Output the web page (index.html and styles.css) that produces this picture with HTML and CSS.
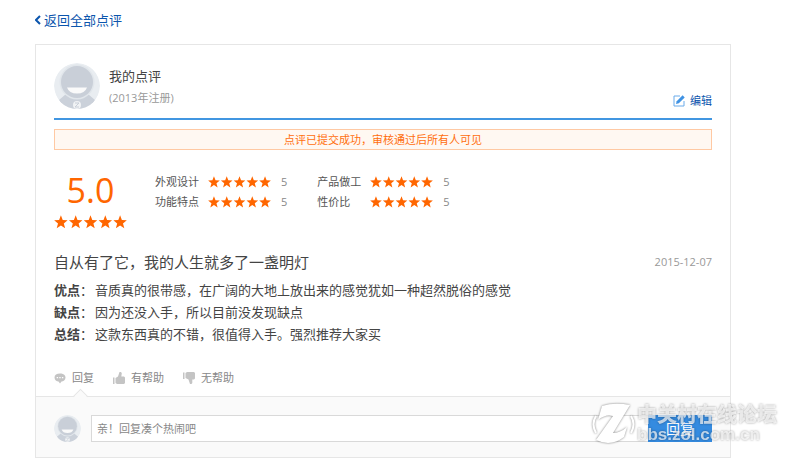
FILE: index.html
```html
<!DOCTYPE html>
<html lang="zh-CN">
<head>
  <meta charset="UTF-8">
  <meta name="viewport" content="width=device-width, initial-scale=1.0">
  <title>我的点评</title>
  <link rel="stylesheet" href="styles.css">
</head>
<body>

  <!-- shared shapes -->
  <svg class="sprite" aria-hidden="true">
    <symbol id="star" viewBox="0 0 20 20">
      <path d="M10 .3l2.600 6.700 7.200.4-5.600 4.600 1.900 7.200-6.100-4-6.100 4 1.900-7.200L.2 7.400l7.200-.4z"/>
    </symbol>
    <symbol id="stars" viewBox="0 0 74 14">
      <use href="#star" x="0" width="14" height="14"/>
      <use href="#star" x="15" width="14" height="14"/>
      <use href="#star" x="30" width="14" height="14"/>
      <use href="#star" x="45" width="14" height="14"/>
      <use href="#star" x="60" width="14" height="14"/>
    </symbol>
    <symbol id="face" viewBox="0 0 46 46">
      <clipPath id="round"><circle cx="23" cy="23" r="23"/></clipPath>
      <g clip-path="url(#round)">
        <circle cx="23" cy="23" r="23" fill="#e9edf1"/>
        <path d="M5 37l7-6q11 8 22 0l7 6-5 9H10z" fill="#cbd1da"/>
        <circle cx="23" cy="19" r="17.500" fill="#e1e6eb"/>
        <circle cx="23" cy="19" r="16" fill="#c9cfd8"/>
        <path d="M13 24.500h20q-2 6-10 6t-10-6z" fill="#fafafa"/>
        <circle cx="23" cy="42" r="4" fill="#f1f3f5"/>
        <path d="M21 40h4l-4 4h4" fill="none" stroke="#c9cfd8"/>
      </g>
    </symbol>
  </svg>

  <a class="back" href="#">
    <svg viewBox="0 0 6 10"><path d="M5 1L1 5l4 4"/></svg>
    返回全部点评
  </a>

  <main class="card">
    <article class="review">
      <header class="user">
        <svg class="avatar"><use href="#face"/></svg>
        <div class="user-info">
          <h1>我的点评</h1>
          <p>(2013年注册)</p>
        </div>
        <a class="edit" href="#">
          <svg viewBox="0 0 12 12">
            <path d="M7 1H1v10h10V6" fill="none" stroke="#6aabea"/>
            <path d="M3 9l.7-2.800L9.600.3l2.100 2.100L5.800 8.300z" fill="#3f92e3"/>
          </svg>
          编辑
        </a>
      </header>

      <p class="notice">点评已提交成功，审核通过后所有人可见</p>

      <section class="scores">
        <div class="overall">
          <strong>5.0</strong>
          <svg class="stars-big"><use href="#stars"/></svg>
        </div>
        <ul class="details">
          <li><span class="name">外观设计</span><svg class="stars"><use href="#stars"/></svg><span class="value">5</span></li>
          <li><span class="name">产品做工</span><svg class="stars"><use href="#stars"/></svg><span class="value">5</span></li>
          <li><span class="name">功能特点</span><svg class="stars"><use href="#stars"/></svg><span class="value">5</span></li>
          <li><span class="name">性价比</span><svg class="stars"><use href="#stars"/></svg><span class="value">5</span></li>
        </ul>
      </section>

      <div class="title-row">
        <h2>自从有了它，我的人生就多了一盏明灯</h2>
        <time datetime="2015-12-07">2015-12-07</time>
      </div>

      <div class="content">
        <p><b>优点</b>：<span>音质真的很带感，在广阔的大地上放出来的感觉犹如一种超然脱俗的感觉</span></p>
        <p><b>缺点</b>：<span>因为还没入手，所以目前没发现缺点</span></p>
        <p><b>总结</b>：<span>这款东西真的不错，很值得入手。强烈推荐大家买</span></p>
      </div>

      <div class="actions">
        <button type="button">
          <svg viewBox="0 0 12 12">
            <path d="M6 1.500c3.300 0 5.500 1.600 5.500 4S9.300 9.500 7.500 9.500L6 11.500 4.500 9.500C2.700 9.500.5 8 .5 5.500s2.200-4 5.500-4z"/>
            <path d="M2.700 5h1.400v1.300H2.700zM5.300 5h1.400v1.300H5.300zM7.900 5h1.400v1.300H7.900z" fill="#fff"/>
          </svg>
          回复
        </button>
        <button type="button">
          <svg viewBox="0 0 12 12"><path d="M0 5.500h1.500V12H0zM2.500 6L5 4.500 6.500 0H8l.8 1.200-.5 3.300H11l1 1V11l-1 1H4l-1.500-1z"/></svg>
          有帮助
        </button>
        <button type="button">
          <svg viewBox="0 0 12 12"><path d="M0 .5h1.500V7H0zM2.500 1L4 0h7l1 1v5.500l-1 1H9.300V11l-.8 1H7L5.500 7.500 2.500 6z"/></svg>
          无帮助
        </button>
      </div>
    </article>

    <form class="reply">
      <svg class="avatar-small"><use href="#face"/></svg>
      <input type="text" aria-label="回复内容" placeholder="亲！回复凑个热闹吧">
      <button type="submit">回复</button>
    </form>

    <div class="watermark">
      <svg viewBox="0 0 44 42">
        <path d="M4 13q-5 8 0 17M39 13q5 8 0 17" class="arc"/>
        <path d="M10 3Q22-1 38 2L21 30q7 0 14-6l-3 10Q19 44 4 37L21 13Q13 11 6 17z"/>
      </svg>
      <p><strong>中关村在线论坛</strong><span>bbs.zol.com.cn</span></p>
    </div>
  </main>

</body>
</html>
```

FILE: styles.css
```css
body {
  margin: 0;
  padding: 12px 69px 8px 35px;
  font-family: "Open Sans", "Noto Sans CJK SC", sans-serif;
  font-size: 11px;
  line-height: 16px;
  color: #444;
  background-color: #fff;
}

h1, h2, p, ul {
  margin: 0;
  padding: 0;
  font-weight: inherit;
}

a {
  color: #0b55ad;
  text-decoration: none;
}

button, input {
  font: inherit;
}

.sprite {
  position: absolute;
  width: 0;
  height: 0;
}

.back {
  display: flex;
  align-items: center;
  gap: 3px;
  width: max-content;
  font-size: 13px;
}

.back svg {
  width: 6px;
  height: 10px;
  fill: none;
  stroke: #0b55ad;
  stroke-width: 2;
}

.card {
  position: relative;
  margin-top: 16px;
  border: 1px solid #e6e6e6;
}

.review {
  padding: 18px 18px 10px;
}

/* user */
.user {
  display: flex;
  align-items: center;
  padding-bottom: 9px;
  border-bottom: 2px solid #4196e1;
}

.avatar {
  width: 46px;
  height: 46px;
}

.user-info {
  flex: 1;
  margin-left: 9px;
  padding-top: 2px;
  line-height: 21px;
}

.user-info h1 {
  font-size: 13px;
}

.user-info p {
  color: #999;
}

.edit {
  display: flex;
  align-items: center;
  align-self: flex-end;
  gap: 5px;
}

.edit svg {
  width: 12px;
  height: 12px;
}

.notice {
  margin-top: 9px;
  line-height: 19px;
  text-align: center;
  color: #ff6f0f;
  background-color: #fff8f2;
  border: 1px solid #ffc9a3;
}

/* scores */
.scores {
  display: flex;
  align-items: flex-start;
  gap: 28px;
  margin-top: 22px;
}

.overall {
  display: flex;
  flex-direction: column;
  align-items: center;
  gap: 7px;
}

.overall strong {
  font-size: 34px;
  font-weight: 400;
  line-height: 36px;
  color: #ff6600;
}

.stars, .stars-big {
  fill: #ff6600;
}

.stars {
  width: 63px;
  height: 12px;
}

.stars-big {
  width: 73px;
  height: 14px;
}

.details {
  display: grid;
  grid-template-columns: max-content max-content;
  column-gap: 30px;
  line-height: 20px;
  color: #555;
  list-style: none;
}

.details li {
  display: flex;
  align-items: center;
}

.name {
  width: 44px;
  margin-right: 9px;
}

.value {
  margin-left: 10px;
  color: #888;
}

/* text of the review */
.title-row {
  display: flex;
  align-items: center;
  justify-content: space-between;
  margin-top: 21px;
  line-height: 24px;
}

.title-row h2 {
  font-size: 15px;
}

.title-row time {
  color: #999;
}

.content {
  margin-top: 5px;
  font-size: 13px;
  line-height: 22px;
}

.content span {
  margin-left: 2px;
}

.actions {
  display: flex;
  gap: 19px;
  margin-top: 25px;
}

.actions button {
  display: flex;
  align-items: center;
  gap: 6px;
  padding: 0;
  border: none;
  background: none;
  color: #888;
  cursor: pointer;
}

.actions svg {
  width: 12px;
  height: 12px;
  fill: #c4c4c4;
}

/* reply */
.reply {
  position: relative;
  display: flex;
  align-items: center;
  padding: 18px 18px 15px;
  border-top: 1px solid #e6e6e6;
  background-color: #fafafa;
}

.reply::before {
  content: "";
  position: absolute;
  top: -6px;
  left: 39px;
  width: 10px;
  height: 10px;
  border-top: 1px solid #e6e6e6;
  border-left: 1px solid #e6e6e6;
  background: linear-gradient(135deg, #fafafa 50%, transparent 50%);
  transform: rotate(45deg);
}

.avatar-small {
  width: 27px;
  height: 27px;
  margin-right: 10px;
}

.reply input {
  flex: 1;
  min-width: 0;
  height: 27px;
  box-sizing: border-box;
  padding: 0 5px;
  border: 1px solid #d9d9d9;
  border-right: none;
  background-color: #fff;
}

.reply input::placeholder {
  color: #888;
}

.reply button {
  width: 64px;
  height: 27px;
  padding: 0;
  border: none;
  background-color: #358be0;
  color: #fff;
  font-size: 14px;
  cursor: pointer;
}

/* forum mark laid over the reply bar */
.watermark {
  position: absolute;
  right: -47px;
  bottom: 12px;
  display: flex;
  align-items: center;
  gap: 1px;
  color: rgba(255, 255, 255, 0.7);
  filter: drop-shadow(0 0 1px rgba(0, 0, 0, 0.5));
  pointer-events: none;
}

.watermark svg {
  width: 44px;
  height: 42px;
  fill: #fff;
}

.watermark .arc {
  fill: none;
  stroke: #fff;
  stroke-width: 2;
}

.watermark strong, .watermark span {
  display: block;
}

.watermark strong {
  font-size: 20px;
  font-weight: 900;
  line-height: 22px;
}

.watermark span {
  font-family: "Liberation Sans", sans-serif;
  font-size: 17px;
  font-weight: 700;
  line-height: 18px;
}
```
